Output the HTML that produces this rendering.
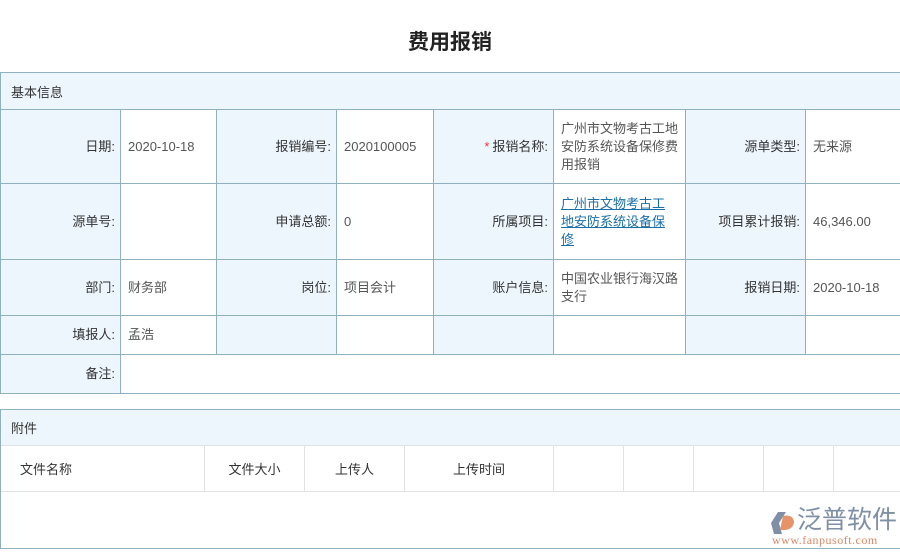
<!DOCTYPE html>
<html><head><meta charset="utf-8"><style>
*{margin:0;padding:0;box-sizing:border-box}
body{width:900px;height:556px;background:#fff;position:relative;overflow:hidden;font-family:"Liberation Sans","Noto Sans CJK SC",sans-serif;font-size:13px;color:#333}
.t{position:absolute;left:0;width:900px;text-align:center;top:26px;font-size:21px;font-weight:bold;color:#222}
.c{position:absolute;border-left:1px solid #8fb1c2;border-top:1px solid #8fb1c2;display:flex;align-items:center;line-height:18px}
.l{background:#eef6fd;justify-content:flex-end;padding-right:6px;color:#333}
.v{background:#fff;padding-left:7px;color:#555}
.h{position:absolute;background:#eef6fd;padding-left:10px;display:flex;align-items:center;color:#333}
a{color:#1a6fa8;text-decoration:underline}
.g{position:absolute;border-left:1px solid #e2e2e2;top:446px;height:45px;display:flex;align-items:center;color:#333}
</style></head><body>
<div class="t">费用报销</div>
<div class="h" style="left:1px;top:73px;width:899px;height:36px">基本信息</div>

<div class="c l" style="left:0;top:109px;width:121px;height:74px">日期:</div>
<div class="c v" style="left:120px;top:109px;width:97px;height:74px">2020-10-18</div>
<div class="c l" style="left:216px;top:109px;width:121px;height:74px">报销编号:</div>
<div class="c v" style="left:336px;top:109px;width:98px;height:74px">2020100005</div>
<div class="c l" style="left:433px;top:109px;width:121px;height:74px"><span style="color:#e33;margin-right:3px">*</span>报销名称:</div>
<div class="c v" style="left:553px;top:109px;width:133px;height:74px;padding-right:6px">广州市文物考古工地安防系统设备保修费用报销</div>
<div class="c l" style="left:685px;top:109px;width:121px;height:74px">源单类型:</div>
<div class="c v" style="left:805px;top:109px;width:96px;height:74px">无来源</div>

<div class="c l" style="left:0;top:183px;width:121px;height:76px">源单号:</div>
<div class="c v" style="left:120px;top:183px;width:97px;height:76px"></div>
<div class="c l" style="left:216px;top:183px;width:121px;height:76px">申请总额:</div>
<div class="c v" style="left:336px;top:183px;width:98px;height:76px">0</div>
<div class="c l" style="left:433px;top:183px;width:121px;height:76px">所属项目:</div>
<div class="c v" style="left:553px;top:183px;width:133px;height:76px;padding-right:14px"><a>广州市文物考古工地安防系统设备保修</a></div>
<div class="c l" style="left:685px;top:183px;width:121px;height:76px">项目累计报销:</div>
<div class="c v" style="left:805px;top:183px;width:96px;height:76px">46,346.00</div>

<div class="c l" style="left:0;top:259px;width:121px;height:56px">部门:</div>
<div class="c v" style="left:120px;top:259px;width:97px;height:56px">财务部</div>
<div class="c l" style="left:216px;top:259px;width:121px;height:56px">岗位:</div>
<div class="c v" style="left:336px;top:259px;width:98px;height:56px">项目会计</div>
<div class="c l" style="left:433px;top:259px;width:121px;height:56px">账户信息:</div>
<div class="c v" style="left:553px;top:259px;width:133px;height:56px;padding-right:6px">中国农业银行海汉路支行</div>
<div class="c l" style="left:685px;top:259px;width:121px;height:56px">报销日期:</div>
<div class="c v" style="left:805px;top:259px;width:96px;height:56px">2020-10-18</div>

<div class="c l" style="left:0;top:315px;width:121px;height:39px">填报人:</div>
<div class="c v" style="left:120px;top:315px;width:97px;height:39px">孟浩</div>
<div class="c l" style="left:216px;top:315px;width:121px;height:39px"></div>
<div class="c v" style="left:336px;top:315px;width:98px;height:39px"></div>
<div class="c l" style="left:433px;top:315px;width:121px;height:39px"></div>
<div class="c v" style="left:553px;top:315px;width:133px;height:39px"></div>
<div class="c l" style="left:685px;top:315px;width:121px;height:39px"></div>
<div class="c v" style="left:805px;top:315px;width:96px;height:39px"></div>

<div class="c l" style="left:0;top:354px;width:121px;height:39px">备注:</div>
<div class="c v" style="left:120px;top:354px;width:781px;height:39px"></div>
<div style="position:absolute;left:0;top:72px;width:901px;height:322px;border:1px solid #8fb1c2;border-right:none"></div>

<div class="h" style="left:1px;top:410px;width:899px;height:36px;border-bottom:1px solid #e2e2e2">附件</div>
<div class="g" style="left:1px;border-left:none;padding-left:19px;width:203px">文件名称</div>
<div class="g" style="left:204px;width:100px;justify-content:center">文件大小</div>
<div class="g" style="left:304px;width:100px;justify-content:center">上传人</div>
<div class="g" style="left:404px;width:149px;justify-content:center">上传时间</div>
<div class="g" style="left:553px;width:70px"></div>
<div class="g" style="left:623px;width:70px"></div>
<div class="g" style="left:693px;width:70px"></div>
<div class="g" style="left:763px;width:70px"></div>
<div class="g" style="left:833px;width:67px"></div>
<div style="position:absolute;left:1px;top:491px;width:899px;border-top:1px solid #e2e2e2"></div>
<div style="position:absolute;left:0;top:409px;width:901px;height:140px;border:1px solid #8fb1c2;border-right:none"></div>

<svg style="position:absolute;left:770px;top:510px" width="28" height="26" viewBox="0 0 28 26">
<path d="M8 2 L16 2 L9 13 L12 24 L4 24 L1 13 Z" fill="#7f8fa6"/>
<path d="M13 6 Q22 4 24 11 Q24 19 15 20 L10 20 Z" fill="#e6936a"/>
</svg>
<div style="position:absolute;left:797px;top:505px;font-size:25px;color:#7f8fa6;letter-spacing:0px;line-height:30px">泛普软件</div>
<div style="position:absolute;left:772px;top:533px;font-family:'Liberation Serif',serif;font-size:12px;color:#d88a66;letter-spacing:0.5px">www.fanpusoft.com</div>
</body></html>
